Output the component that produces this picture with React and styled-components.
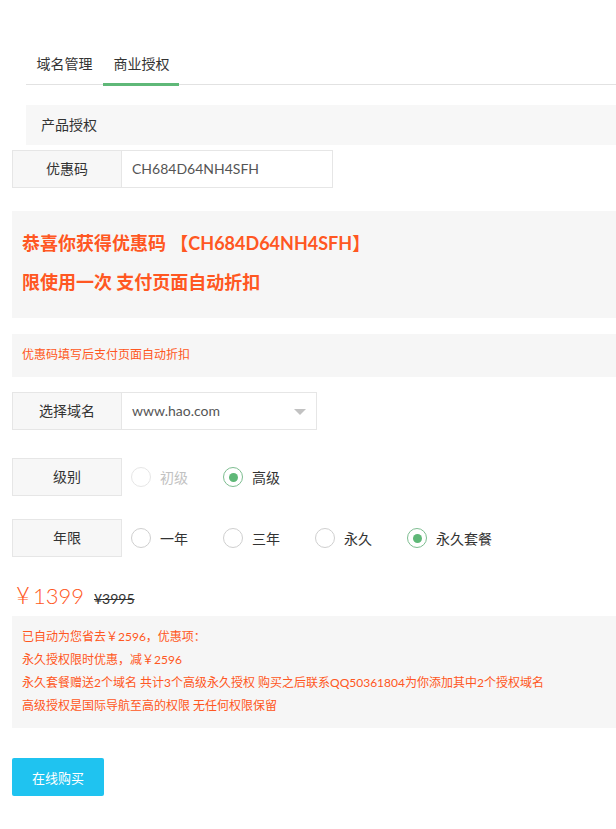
import React from "react";
import styled, { createGlobalStyle } from "styled-components";

const Global = createGlobalStyle`
  html, body { margin: 0; padding: 0; background: #fff; }
  body {
    font-family: Lato, "Noto Sans CJK SC", "Noto Sans", sans-serif;
    color: #333;
    font-size: 14px;
  }
`;

const Page = styled.div`
  width: 616px;
  padding-top: 44px;
  padding-bottom: 33px;
  overflow: hidden;
`;

const TabBar = styled.div`
  margin-left: 26px;
  height: 40px;
  border-bottom: 1px solid #e2e2e2;
  display: flex;
`;

const Tab = styled.div`
  position: relative;
  width: 77px;
  height: 40px;
  line-height: 40px;
  text-align: center;
  font-size: 14px;
  color: #333;
  ${(p) =>
    p.$active &&
    `&::after {
      content: "";
      position: absolute;
      left: 0;
      right: 1px;
      bottom: -2px;
      height: 3px;
      background: #5fb878;
    }`}
`;

const SectionHead = styled.div`
  margin: 20px 0 0 26px;
  height: 40px;
  line-height: 40px;
  padding-left: 15px;
  background: #f7f7f7;
  font-size: 14px;
  color: #333;
`;

const Row = styled.div`
  display: flex;
  align-items: center;
  margin-left: 12px;
  margin-top: ${(p) => p.$mt}px;
`;

const Label = styled.div`
  box-sizing: border-box;
  width: 110px;
  height: 38px;
  line-height: 36px;
  text-align: center;
  background: #f7f7f7;
  border: 1px solid #e6e6e6;
  font-size: 14px;
  color: #333;
`;

const Field = styled.div`
  position: relative;
  box-sizing: border-box;
  width: ${(p) => p.$w}px;
  height: 38px;
  line-height: 36px;
  padding-left: 10px;
  border: 1px solid #e6e6e6;
  border-left: none;
  font-size: 14px;
  color: #555;
`;

const Caret = styled.span`
  position: absolute;
  right: 10px;
  top: 16px;
  width: 0;
  height: 0;
  border-left: 6px solid transparent;
  border-right: 6px solid transparent;
  border-top: 6px solid #c2c2c2;
`;

const Notice = styled.div`
  margin: 23px 0 0 12px;
  padding: 13px 10px 16px;
  background: #f6f6f6;
  color: #ff5722;
  font-size: 18px;
  font-weight: 700;
  line-height: 39px;
`;

const Hint = styled.div`
  margin: 16px 0 0 12px;
  height: 43px;
  line-height: 41px;
  padding: 0 10px;
  background: #f6f6f6;
  color: #ff5722;
  font-size: 12px;
`;

const Radios = styled.div`
  display: flex;
  align-items: center;
  margin-left: 9px;
`;

const RadioItem = styled.div`
  display: flex;
  align-items: center;
  margin-right: 35px;
  font-size: 14px;
  color: ${(p) => (p.$disabled ? "#c2c2c2" : "#333")};
`;

const Circle = styled.span`
  position: relative;
  box-sizing: border-box;
  width: 20px;
  height: 20px;
  border-radius: 50%;
  margin-right: 9px;
  border: 1.5px solid
    ${(p) => (p.$checked ? "#7dbd90" : p.$disabled ? "#e6e6e6" : "#cfcfcf")};
  ${(p) =>
    p.$checked &&
    `&::after {
      content: "";
      position: absolute;
      left: 50%;
      top: 50%;
      width: 9px;
      height: 9px;
      margin: -4.5px 0 0 -4.5px;
      border-radius: 50%;
      background: #5fb878;
    }`}
`;

const PriceRow = styled.div`
  display: flex;
  align-items: baseline;
  margin: 23px 0 0 16px;
  height: 32px;
`;

const Yen = styled.span`
  font-size: 24px;
  font-weight: 300;
  color: #ff5722;
  margin-right: 3px;
`;

const Price = styled.span`
  font-size: 22px;
  font-weight: 300;
  color: #ff5722;
  margin-right: 10px;
`;

const OldPrice = styled.span`
  font-size: 14px;
  color: #333;
  text-decoration: line-through;
`;

const Info = styled.div`
  margin: 4px 0 0 12px;
  padding: 9px 10px 11px;
  background: #f6f6f6;
  color: #ff5722;
  font-size: 12px;
  line-height: 23px;
`;

const BuyButton = styled.button`
  display: block;
  margin: 30px 0 0 12px;
  width: 92px;
  height: 38px;
  border: none;
  border-radius: 2px;
  background: #1fc3f0;
  color: #fff;
  font-family: inherit;
  font-size: 13px;
  cursor: pointer;
`;

function Radio({ label, checked, disabled }) {
  return (
    <RadioItem $disabled={disabled}>
      <Circle $checked={checked} $disabled={disabled} />
      {label}
    </RadioItem>
  );
}

export default function App() {
  return (
    <Page>
      <Global />
      <TabBar>
        <Tab>域名管理</Tab>
        <Tab $active>商业授权</Tab>
      </TabBar>
      <SectionHead>产品授权</SectionHead>
      <Row $mt={5}>
        <Label>优惠码</Label>
        <Field $w={211}>CH684D64NH4SFH</Field>
      </Row>
      <Notice>
        <div>恭喜你获得优惠码 【CH684D64NH4SFH】</div>
        <div>限使用一次 支付页面自动折扣</div>
      </Notice>
      <Hint>优惠码填写后支付页面自动折扣</Hint>
      <Row $mt={15}>
        <Label>选择域名</Label>
        <Field $w={195}>
          www.hao.com
          <Caret />
        </Field>
      </Row>
      <Row $mt={28}>
        <Label>级别</Label>
        <Radios>
          <Radio label="初级" disabled />
          <Radio label="高级" checked />
        </Radios>
      </Row>
      <Row $mt={23}>
        <Label>年限</Label>
        <Radios>
          <Radio label="一年" />
          <Radio label="三年" />
          <Radio label="永久" />
          <Radio label="永久套餐" checked />
        </Radios>
      </Row>
      <PriceRow>
        <Yen>¥</Yen>
        <Price>1399</Price>
        <OldPrice>¥3995</OldPrice>
      </PriceRow>
      <Info>
        <div>已自动为您省去￥2596，优惠项：</div>
        <div>永久授权限时优惠，减￥2596</div>
        <div>永久套餐赠送2个域名 共计3个高级永久授权 购买之后联系QQ50361804为你添加其中2个授权域名</div>
        <div>高级授权是国际导航至高的权限 无任何权限保留</div>
      </Info>
      <BuyButton>在线购买</BuyButton>
    </Page>
  );
}
